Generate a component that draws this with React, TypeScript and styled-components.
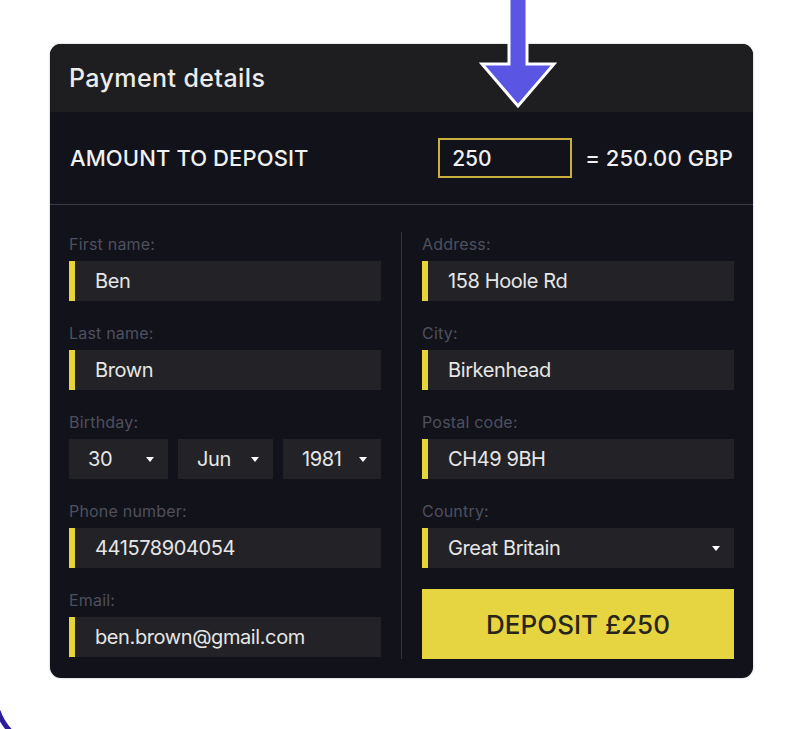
import React from "react";
import styled, { createGlobalStyle } from "styled-components";

const Global = createGlobalStyle`
  html, body { margin: 0; padding: 0; background: #ffffff; }
  body { font-family: Inter, "Open Sans", sans-serif; }
  * { box-sizing: border-box; }
`;

const Page = styled.div`
  position: relative;
  width: 788px;
  height: 729px;
  overflow: hidden;
  background: #ffffff;
  padding: 44px 35px 0 50px;
`;

const Card = styled.div`
  width: 703px;
  border-radius: 11px;
  overflow: hidden;
  background: #12121b;
  box-shadow: 0 0 2px rgba(0, 0, 0, 0.35);
  display: flex;
  flex-direction: column;
`;

const Header = styled.div`
  height: 68px;
  background: #1e1e21;
  display: flex;
  align-items: center;
  padding: 0 19px;
  color: #ececec;
  font-size: 25px;
  font-weight: 500;
  letter-spacing: 0.4px;
`;

const AmountRow = styled.div`
  height: 93px;
  display: flex;
  align-items: center;
  padding: 0 20px 0 20px;
  border-bottom: 1px solid #3a3b47;
`;

const AmountLabel = styled.div`
  flex: 1;
  color: #f0f0f0;
  font-size: 22px;
  font-weight: 500;
  letter-spacing: 0.1px;
`;

const AmountInput = styled.div`
  width: 134px;
  height: 40px;
  border: 2px solid #c9b03e;
  display: flex;
  align-items: center;
  padding-left: 12px;
  color: #f0f0f0;
  font-size: 21px;
  font-weight: 500;
  margin-right: 13px;
`;

const Converted = styled.div`
  color: #f0f0f0;
  font-size: 22px;
  font-weight: 500;
  letter-spacing: 0.1px;
`;

const Form = styled.div`
  display: grid;
  grid-template-columns: 312px 1px 312px;
  column-gap: 20px;
  padding: 30px 20px 19px 19px;
`;

const Column = styled.div`
  display: flex;
  flex-direction: column;
  gap: 23px;
`;

const Divider = styled.div`
  background: #34353f;
  margin-top: -3px;
`;

const Field = styled.div`
  display: flex;
  flex-direction: column;
  gap: 8px;
`;

const Label = styled.div`
  color: #4e505e;
  font-size: 16px;
  line-height: 18px;
  letter-spacing: 0.2px;
`;

const Input = styled.div<{ $bar?: boolean }>`
  height: 40px;
  background: #232327;
  display: flex;
  align-items: center;
  justify-content: space-between;
  padding: 0 14px 0 ${(p) => (p.$bar ? "20px" : "19px")};
  color: #e6e6e6;
  font-size: 20px;
  letter-spacing: -0.4px;
  border-left: ${(p) => (p.$bar ? "6px solid #e5d43a" : "none")};
`;

const DateRow = styled.div`
  display: grid;
  grid-template-columns: 99px 95px 98px;
  column-gap: 10px;
`;

const Caret = styled.span`
  width: 0;
  height: 0;
  border-left: 4px solid transparent;
  border-right: 4px solid transparent;
  border-top: 5px solid #ffffff;
`;

const DepositButton = styled.button`
  height: 70px;
  margin-top: -2px;
  border: none;
  background: #e6d541;
  color: #29251a;
  font-family: Inter, "Open Sans", sans-serif;
  font-size: 26px;
  font-weight: 500;
  letter-spacing: 0;
  cursor: pointer;
`;

const ArrowSvg = styled.svg`
  position: absolute;
  left: 474px;
  top: -4px;
`;

const FrameCurve = styled.svg`
  position: absolute;
  left: 0;
  bottom: 0;
`;

function TextField({ label, value }: { label: string; value: string }) {
  return (
    <Field>
      <Label>{label}</Label>
      <Input $bar>{value}</Input>
    </Field>
  );
}

export default function App() {
  return (
    <>
      <Global />
      <Page>
        <Card>
          <Header>Payment details</Header>
          <AmountRow>
            <AmountLabel>AMOUNT TO DEPOSIT</AmountLabel>
            <AmountInput>250</AmountInput>
            <Converted>= 250.00 GBP</Converted>
          </AmountRow>
          <Form>
            <Column>
              <TextField label="First name:" value="Ben" />
              <TextField label="Last name:" value="Brown" />
              <Field>
                <Label>Birthday:</Label>
                <DateRow>
                  <Input>
                    30 <Caret />
                  </Input>
                  <Input>
                    Jun <Caret />
                  </Input>
                  <Input>
                    1981 <Caret />
                  </Input>
                </DateRow>
              </Field>
              <TextField label="Phone number:" value="441578904054" />
              <TextField label="Email:" value="ben.brown@gmail.com" />
            </Column>
            <Divider />
            <Column>
              <TextField label="Address:" value="158 Hoole Rd" />
              <TextField label="City:" value="Birkenhead" />
              <TextField label="Postal code:" value="CH49 9BH" />
              <Field>
                <Label>Country:</Label>
                <Input $bar>
                  Great Britain <Caret />
                </Input>
              </Field>
              <DepositButton>DEPOSIT £250</DepositButton>
            </Column>
          </Form>
        </Card>
        <ArrowSvg width="88" height="116" viewBox="0 0 88 116">
          <path
            d="M35 0 L53 0 L53 68 L80 68 L44 110 L8 68 L35 68 Z"
            fill="#5a55e2"
            stroke="#ffffff"
            strokeWidth="3"
            strokeLinejoin="miter"
          />
        </ArrowSvg>
        <FrameCurve width="20" height="20" viewBox="0 0 20 20">
          <path d="M-2 2 Q2 14 12 24" stroke="#2a1c9a" strokeWidth="5" fill="none" />
        </FrameCurve>
      </Page>
    </>
  );
}
